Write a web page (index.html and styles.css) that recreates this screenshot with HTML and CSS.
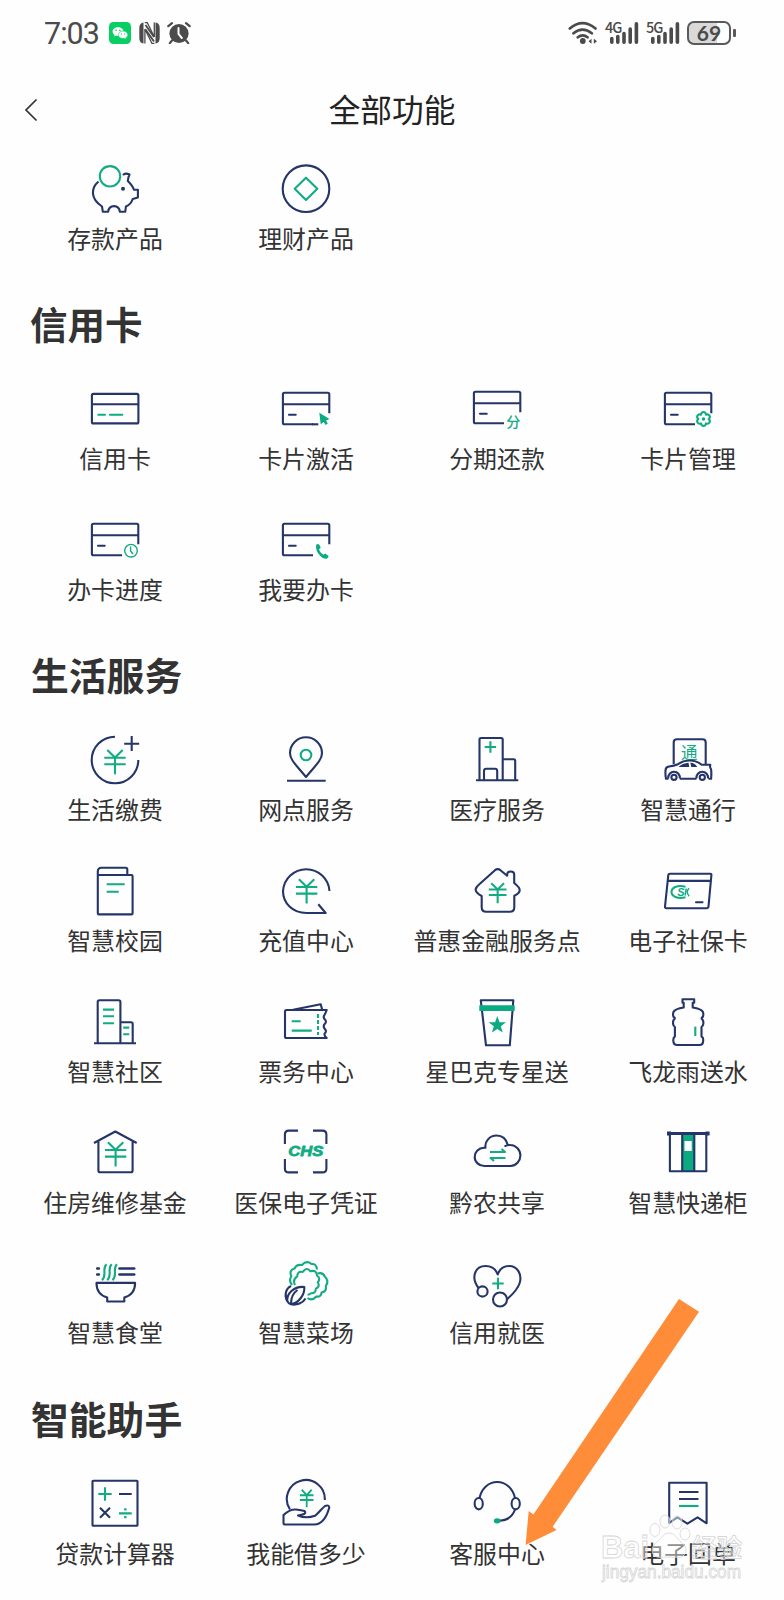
FILE: index.html
```html
<!DOCTYPE html>
<html lang="zh-CN">
<head>
    <meta charset="UTF-8">
    <meta name="viewport" content="width=device-width, initial-scale=1.0">
    <title>全部功能</title>
    <link rel="stylesheet" href="styles.css">
</head>
<body>
    <!-- shared shapes -->
    <svg class="defs" width="0" height="0">
        <symbol id="yen" viewBox="0 0 50 50">
            <path d="M17.3 15 25 22.5l7.7-7.5M14.3 22.7h21.4M14.3 29.3h21.4M25 22.5v16.8"/>
        </symbol>
        <symbol id="card" viewBox="0 0 50 50">
            <path d="M48.3 29.3V10.2q0-1.5-1.5-1.5H3.4q-1.5 0-1.5 1.5v28.6q0 1.5 1.5 1.5H32M1.9 20.3h46.4"/>
            <path d="M8 30.7h6.7" stroke-linecap="round"/>
        </symbol>
    </svg>

    <div class="status-bar">
        <div class="status-left">
            <span class="time">7:03</span>
            <svg class="wechat" width="22" height="22" viewBox="0 0 22 22">
                <rect width="22" height="22" rx="4.5" fill="#07cf63"/>
                <path d="M9 5.2c-3 0-5.4 1.9-5.4 4.3 0 1.4.8 2.6 2 3.4l-.5 1.7 2-1c.6.2 1.2.3 1.9.3 3 0 5.4-1.900 5.400-4.400S12 5.200 9 5.200z" fill="#fff"/>
                <path d="M14 9c-2.600 0-4.700 1.700-4.700 3.800s2.100 3.800 4.700 3.800l1.600-.2 1.700.9-.4-1.500c1.200-.7 1.900-1.800 1.900-3C18.800 10.700 16.600 9 14 9z" fill="#fff" stroke="#07cf63" stroke-width=".6"/>
                <g fill="#07cf63"><circle cx="7.200" cy="8.300" r=".8"/><circle cx="10.800" cy="8.300" r=".8"/><circle cx="12.500" cy="12" r=".6"/><circle cx="15.500" cy="12" r=".6"/></g>
            </svg>
            <svg class="nfc" width="21" height="22" viewBox="0 0 21 22">
                <path d="M4.500.5Q.3 1 .3 6v10q0 5 4.200 5.500z" fill="#4b4b4b"/>
                <path d="M16.500.5Q20.700 1 20.700 6v10q0 5-4.200 5.500z" fill="#4b4b4b"/>
                <path d="M5.800.5h2.400L15.300 15V.5M5.900 21.500V7l7.100 14.500h2.400" fill="none" stroke="#4b4b4b" stroke-width="1.300"/>
                <path d="M6.500 3l8.500 12M6.500 7.500l8.500 12" stroke="#4b4b4b" stroke-width="1.900"/>
            </svg>
            <svg class="alarm" width="24" height="22" viewBox="0 0 24 22">
                <circle cx="12" cy="11.500" r="9.600" fill="#4b4b4b"/>
                <path d="M1.300 4.200 5 1.200M22.700 4.200 19 1.200M5 18.500l-2.200 2.600M19 18.500l2.200 2.600" stroke="#4b4b4b" stroke-width="2.200" stroke-linecap="round"/>
                <path d="M11.500 6v6l3.300 4" fill="none" stroke="#fff" stroke-width="2" stroke-linecap="round"/>
            </svg>
        </div>
        <div class="status-right">
            <svg class="wifi" width="30" height="24" viewBox="0 0 30 24">
                <g fill="none" stroke="#4b4b4b" stroke-width="2.700" stroke-linecap="round">
                    <path d="M1.800 7.500Q14.500-3.300 27.500 7.500M5.500 12.300q9-7.300 18.300 0M9.800 16.300q4.900-4 9.700 0"/>
                </g>
                <circle cx="14.800" cy="20" r="2.900" fill="#4b4b4b"/>
                <path d="M20.500 20.300l3-2.500v5zM29 20.300l-3.200-2.500v5z" fill="#4b4b4b"/>
            </svg>
            <div class="signal">
                <span>4G</span>
                <svg width="34" height="24" viewBox="0 0 34 24">
                    <path d="M6.800 17.500v3.800M12.800 15.500v5.800M19 12.500v8.800M25.200 8v13.300M31.400 2.700v18.600" stroke="#4b4b4b" stroke-width="3.600" stroke-linecap="round"/>
                </svg>
            </div>
            <div class="signal">
                <span>5G</span>
                <svg width="34" height="24" viewBox="0 0 34 24">
                    <path d="M6.800 17.500v3.800M12.800 15.500v5.800M19 12.500v8.800M25.200 8v13.300M31.400 2.700v18.600" stroke="#4b4b4b" stroke-width="3.600" stroke-linecap="round"/>
                </svg>
            </div>
            <div class="battery"><span>69</span></div>
            <div class="battery-tip"></div>
        </div>
    </div>

    <div class="header">
        <svg class="back" width="14" height="24" viewBox="0 0 14 24">
            <path d="M12.500 1.500 2 12l10.500 10.500" fill="none" stroke="#333" stroke-width="1.700"/>
        </svg>
        <h1>全部功能</h1>
    </div>

    <div class="content">
        <div class="grid">
            <div class="item">
                <svg class="icon" viewBox="0 0 50 50">
                    <path d="M8.500 17.500C1 24 0 34.500 12 42.500l.8 5.200h5.400c.4-3.700 2.800-5.600 5.800-5.600s5.400 1.900 5.800 5.600h5.500l.6-5.200c3.500-1.500 5.600-3.700 6.800-7.500l5.200-1.500v-7.800h-4c-1-3.700-3.400-6-6.100-8.700.2-2.300.5-4 1.700-6.500-3-1.300-5.500-.7-6.500.7"/>
                    <circle class="dot-navy" cx="33" cy="24.700" r="2"/>
                    <circle class="green" cx="20" cy="12.300" r="10.200"/>
                </svg>
                <span>存款产品</span>
            </div>
            <div class="item">
                <svg class="icon" viewBox="0 0 50 50">
                    <circle cx="25" cy="24.700" r="23.300"/>
                    <path class="green" d="M25 13.700 36.300 24.800 25 36 13.700 24.800z"/>
                </svg>
                <span>理财产品</span>
            </div>
        </div>

        <h2>信用卡</h2>
        <div class="grid">
            <div class="item">
                <svg class="icon" viewBox="0 0 50 50">
                    <rect x="1.900" y="9.900" width="46.500" height="29.500" rx="1.500"/>
                    <path d="M1.900 20.300h46.500"/>
                    <path class="green round" d="M8.300 30.700h6.700M20 30.700h12.300"/>
                </svg>
                <span>信用卡</span>
            </div>
            <div class="item">
                <svg class="icon" viewBox="0 0 50 50">
                    <use href="#card"/>
                    <path d="M31 40.300h6.300"/>
                    <path class="fill-green" d="M38.300 28.700 39.700 40.300l3-2.300 1.900 3 2.200-1.500-1.800-2.900 3.500-1.500z"/>
                </svg>
                <span>卡片激活</span>
            </div>
            <div class="item">
                <svg class="icon" viewBox="0 0 50 50">
                    <use href="#card" y="-1"/>
                    <text class="glyph fen" x="41.200" y="42.600" font-size="14">分</text>
                </svg>
                <span>分期还款</span>
            </div>
            <div class="item">
                <svg class="icon" viewBox="0 0 50 50">
                    <use href="#card"/>
                    <path class="green" d="M38 30.700q.3-2.700 2.500-2.700t2.500 2.700q2.400-1 3.500.9t-.9 3.400q2 1.600.9 3.500t-3.500.9q-.3 2.500-2.500 2.500t-2.500-2.500q-2.400 1-3.500-.9t.9-3.500q-2-1.500-.9-3.400t3.500-.9z"/>
                    <circle class="fill-green" cx="40.500" cy="35" r="1.700"/>
                </svg>
                <span>卡片管理</span>
            </div>
            <div class="item">
                <svg class="icon" viewBox="0 0 50 50">
                    <use href="#card"/>
                    <g class="green thin"><circle cx="41" cy="35.700" r="6.300"/><path d="M40.600 31.500v4.500l2.400 3"/></g>
                </svg>
                <span>办卡进度</span>
            </div>
            <div class="item">
                <svg class="icon" viewBox="0 0 50 50">
                    <use href="#card"/>
                    <path class="fill-green" d="M35.300 29.500q2.300-1.600 3.500.9l.9 2.300-1.700 1.700q1.300 3.600 4.500 5.300l1.800-1.200 3 2.200q1 1-1.200 2.700-3.400 1.300-7.200-3-5-5.200-3.600-10.900z"/>
                </svg>
                <span>我要办卡</span>
            </div>
        </div>

        <h2 class="wide">生活服务</h2>
        <div class="grid">
            <div class="item">
                <svg class="icon" viewBox="0 0 50 50">
                    <path d="M25 1.700A23.300 23.300 0 1 0 48.300 25M41.700 1v15M34.200 8.700h15"/>
                    <use class="green" href="#yen"/>
                </svg>
                <span>生活缴费</span>
            </div>
            <div class="item">
                <svg class="icon" viewBox="0 0 50 50">
                    <path d="M25 42C16 31 9 25 9 18.300a16 16 0 0 1 32 0C41 25 34 31 25 42zM6 45.700h38.700"/>
                    <circle class="green" cx="25" cy="20" r="5.300"/>
                </svg>
                <span>网点服务</span>
            </div>
            <div class="item">
                <svg class="icon" viewBox="0 0 50 50">
                    <path d="M7.500 45.300V4.500q0-1.500 1.500-1.500h20.200q1.500 0 1.500 1.500v40.800M30.700 24.300h11q1.500 0 1.500 1.500v19.500M12 45.300V36q0-2.300 2.300-2.300H23q2.200 0 2.200 2.300v9.300M4 45.300h42.300"/>
                    <path class="green" d="M18.400 6.300v11.400M12.700 12h11.400"/>
                </svg>
                <span>医疗服务</span>
            </div>
            <div class="item">
                <svg class="icon" viewBox="0 0 50 50">
                    <path d="M10.700 29V7.500q0-3.200 3.200-3.200h25.600q3.200 0 3.200 3.200V29"/>
                    <text class="glyph" x="26.300" y="24" font-size="16.500">通</text>
                    <path class="body" d="M5.500 43.800H3q-.8-4-.5-8.300 0-3.500 3.500-4 5-.7 9-2.300 5-3.700 11.500-3.700 6.500-.3 12.200 4.300h8.600q-.8 2.300.8 4.500.5 4.500 0 9.500h-2.600M16.800 43.800h16.700"/>
                    <path class="fill-navy" d="M15.500 32q4-3.800 10-4.200l.8 4.200zM27.300 27.800q4-.2 7 4.200h-6z"/>
                    <path d="M5.300 43.500a5.800 6 0 1 1 11.500 0M33.500 43.500a5.800 6 0 1 1 11.500 0"/>
                    <circle cx="11" cy="42.300" r="2.600"/><circle cx="39.300" cy="42.300" r="2.600"/>
                </svg>
                <span>智慧通行</span>
            </div>
            <div class="item">
                <svg class="icon" viewBox="0 0 50 50">
                    <path d="M7.800 46V5.500q0-3.800 3.800-3.800h24q1.700 0 1.700 1.700V9M7.800 9h33.600q1.200 0 1.200 1.200v37q0 1.200-1.200 1.200H9q-1.200 0-1.200-1.200V44"/>
                    <path class="green" d="M16.700 18.300h18M16.700 25.700h12"/>
                </svg>
                <span>智慧校园</span>
            </div>
            <div class="item">
                <svg class="icon" viewBox="0 0 50 50">
                    <path d="M48.500 25A23.300 23.300 0 0 0 2 25c0 12 9.500 22 23.500 22H44.700l-7.400-8.700"/>
                    <use class="green" href="#yen" x=".6" y="-1.700"/>
                </svg>
                <span>充值中心</span>
            </div>
            <div class="item">
                <svg class="icon" viewBox="0 0 50 50">
                    <path d="M23 4.200q2.700-2 5.400 0l6.800 5.500V8.500q0-3 3.500-3t3.500 3V17q5.500 4.300 5.500 7.200t-5.400 5.500v11.500q0 4.500-4.500 4.500H14.200q-4.500 0-4.500-4.500V30Q4 27 3.600 23.700q.2-2.700 4-5.700z"/>
                    <g class="green" transform="translate(4.900 4.700) scale(.83)"><use href="#yen" stroke-width="2.500"/></g>
                </svg>
                <span>普惠金融服务点</span>
            </div>
            <div class="item">
                <svg class="icon" viewBox="0 0 50 50">
                    <path d="M7 7.700h40.200q1.300 0 1.200 1.300l-2.900 31.500q-.2 1.800-1.900 1.800H3.500q-1.600 0-1.500-1.600L5.300 9q.1-1.300 1.700-1.300zM5 14.900h43"/>
                    <path d="M33 36.300h6.500" class="round"/>
                    <path class="green" d="M22.500 20.800C14 18.500 8.500 21.800 8.500 26s6 7.300 14 5.200"/>
                    <text class="logo" x="17.800" y="30" font-size="11">S</text>
                    <path class="green thin" d="M23.300 22.500l-1.300 7M26 22.300q-3.600 4 .2 8"/>
                </svg>
                <span>电子社保卡</span>
            </div>
            <div class="item">
                <svg class="icon" viewBox="0 0 50 50">
                    <path d="M7.700 46.300V5q0-1.700 1.700-1.700h19.300q1.700 0 1.700 1.700v41.300M30.400 25.300h10.700q1.600 0 1.600 1.600v19.400M4 46.300h42"/>
                    <path class="green" d="M13 12.600h11M13 19.300h11M13 26.300h11M33.200 30.600h6M33.200 37.300h6"/>
                </svg>
                <span>智慧社区</span>
            </div>
            <div class="item">
                <svg class="icon" viewBox="0 0 50 50">
                    <path d="M45.700 13H5.500Q4 13 4 14.500v25Q4 41 5.500 41h40.200q-3-2.500-2-4.500 2.500-2.200 0-4.800-2-2.300 0-4.700 2.500-2.300 0-4.700-2-2.300 0-4.700 1-1.800 2-4.600zM12 12.800l27.700-5.500 1.500 5.500"/>
                    <path class="green" d="M10.700 24.300h9M10.700 33.600h20"/>
                    <path class="green dash" d="M37 17v21"/>
                </svg>
                <span>票务中心</span>
            </div>
            <div class="item">
                <svg class="icon" viewBox="0 0 50 50">
                    <path d="M8.800 3.300h32.500l-3.500 45H14z"/>
                    <path class="fill-green" d="M7.300 8.300h35.400v5.600H7.300zM25.300 19l2.200 6.200 6.500.1-5.200 4 1.900 6.300-5.400-3.700-5.400 3.700 1.900-6.300-5.200-4 6.500-.1z"/>
                </svg>
                <span>星巴克专星送</span>
            </div>
            <div class="item">
                <svg class="icon" viewBox="0 0 50 50">
                    <path d="M19.500 2.300h11.700v3.500h-1.500v4.700q8.500 1.200 10.300 4.500.7 3-.2 5-2.500 1.200 0 3 1.200 2.700 0 5.500-1.700 1.300-1.300 2.500v8.500q2 1 1.700 4 0 4.500-3.700 4.500H14.200q-3.900 0-3.900-4.500-.2-3 1.600-4V31q.4-1.200-1.300-2.500-1.200-2.800 0-5.500 2.500-1.800 0-3-1-2-.2-5 1.800-3.300 10.300-4.500V5.800h-1.200z"/>
                    <path class="green" d="M32.300 29.600V39"/>
                </svg>
                <span>飞龙雨送水</span>
            </div>
            <div class="item">
                <svg class="icon" viewBox="0 0 50 50">
                    <path d="M4 16 25.300 4.500 46.700 16M8.400 14v29.500q0 1.800 1.800 1.800h30.600q1.800 0 1.800-1.800V14"/>
                    <use class="green" href="#yen" x=".6" y=".3"/>
                </svg>
                <span>住房维修基金</span>
            </div>
            <div class="item">
                <svg class="icon" viewBox="0 0 50 50">
                    <path d="M3.900 17V7.600q0-4 4-4H17M32 3.600h9.400q4 0 4 4V17M3.900 32v9.400q0 4 4 4H17M32 45.400h9.400q4 0 4-4V32"/>
                    <text class="logo chs" x="24.700" y="29" font-size="14" textLength="35" lengthAdjust="spacingAndGlyphs">CHS</text>
                </svg>
                <span>医保电子凭证</span>
            </div>
            <div class="item">
                <svg class="icon" viewBox="0 0 50 50">
                    <path d="M32.500 19.500q2.500-1.800 6-1.500c5.500.3 9.900 5 9.900 10.500S44 39 38.500 39H12.300C7 39 2.700 35 2.700 30s4-9 9.300-9.200h1.500C12.500 14 18 8.500 24.500 8.500c5.500 0 9.800 3.500 11.300 9.500"/>
                    <path class="green" d="M18 25h15l-3.500-3M33.500 31h-15l3.500 3"/>
                </svg>
                <span>黔农共享</span>
            </div>
            <div class="item">
                <svg class="icon" viewBox="0 0 50 50">
                    <path class="fill-green" d="M19.500 8h11.700v36H19.500z"/>
                    <path class="window" d="M21.500 14h7.200v10h-7.200z"/>
                    <path d="M6.900 7v37.200h36.400V7M19.200 7v37M31.300 7v37"/>
                    <path stroke-width="2.800" d="M4.300 6.500h41.900"/>
                    <path class="fill-navy" d="M4 4.500h4v4H4zM42.500 4.500h4v4h-4z"/>
                </svg>
                <span>智慧快递柜</span>
            </div>
            <div class="item">
                <svg class="icon" viewBox="0 0 50 50">
                    <path d="M6.500 24.900h38.600c0 7.500-4 12.500-10.800 14.600v4H17.200v-4C10.500 37.500 6.500 32.500 6.500 24.900z"/>
                    <path class="round" stroke-width="2.700" d="M7.300 10.500h1.500M7.300 16.500h1.500M29.500 10.500h14.700M29.500 16.500h14.700"/>
                    <path class="green" d="M16.500 6.200c-5 4.500 1 11-4.500 16M21.700 6.200c-5 4.500 1 11-4.500 16M27 6.200c-5 4.500 1 11-4.500 16"/>
                </svg>
                <span>智慧食堂</span>
            </div>
            <div class="item">
                <svg class="icon" viewBox="0 0 50 50">
                    <path class="green" d="M11 27q-3.500-4.500-.7-8.500-2.500-6.500 3.200-8 2-4.500 7.500-3.500 4.500-5 9.500-1 5-.5 5.500 5.500"/>
                    <path class="green" d="M14 27q-2.800-5.500 2.200-8.700.3-5.500 5.500-4.300 3.800-5.500 7.800-.7 6-1.800 6.500 4.200 4 3 .8 6.700 2.500 4.500-2 6.500 0 5-4.800 4.500-1.500 1.500-3.500 1.500"/>
                    <path class="green" d="M36.500 15.500q5.500-1.500 7.300 3 4.700 4.500 1 9.500 1.200 5.500-4.200 6.500-.6 5-5.300 4-4.500 5-8.800 1.500"/>
                    <path d="M10 28C4.500 30.500 3 38 6.500 43.500 5 36 13 28 23.300 29c.7 8.500-6.500 16.500-13.500 17.300C16 47.500 22 45 24.500 40.500M6.500 43.500q1.300 2.300 3.300 2.800M10 45.500Q10 36.500 16.500 32"/>
                </svg>
                <span>智慧菜场</span>
            </div>
            <div class="item">
                <svg class="icon" viewBox="0 0 50 50">
                    <g stroke-width="2.100">
                        <path d="M6.500 30C-1.500 19.500 3 8 13.500 8c5.500 0 10.300 3 12.200 8.500C27.600 11 32 8 37 8c8.500 0 13.500 8.500 10.500 17.500-2 6-7 11-12.500 15.800"/>
                        <circle cx="10.500" cy="33.500" r="5.100"/><circle cx="28" cy="41.500" r="7"/>
                    </g>
                    <path class="green" d="M26 19.800v11.400M20.300 25.500h11.400"/>
                </svg>
                <span>信用就医</span>
            </div>
        </div>

        <h2 class="wide">智能助手</h2>
        <div class="grid">
            <div class="item">
                <svg class="icon" viewBox="0 0 50 50">
                    <rect x="2.500" y="2.700" width="45" height="45" rx=".8"/>
                    <path d="M29 16h12.700M10 29.800l10 10M20 29.800l-10 10"/>
                    <path class="green" d="M15 9.300v13.400M8.300 16h13.400M29 35.400h12.700"/>
                    <path class="fill-green" d="M34.200 30.300h2.300v2.300h-2.300zM34.200 38h2.300v2.300h-2.300z"/>
                </svg>
                <span>贷款计算器</span>
            </div>
            <div class="item">
                <svg class="icon" viewBox="0 0 50 50">
                    <path d="M9 31.500A19 19 0 1 1 43.800 22"/>
                    <path d="M2.500 37q6.500-6 12.500-5.500 5.500.7 8.500 1.500c2.500 2.500-1.500 4-6.500 4.500 6 2.500 12 2 17 .3C38 35 41 30 44 28q4-1.500 4.300 1.500C46.500 36 43 46.500 33 46.500H4q-1.500 0-1.500-1.500z"/>
                    <g class="green" transform="translate(9.700 1) scale(.64 .72)"><use href="#yen" stroke-width="2.800"/></g>
                </svg>
                <span>我能借多少</span>
            </div>
            <div class="item">
                <svg class="icon" viewBox="0 0 50 50">
                    <ellipse cx="6.700" cy="25.700" rx="4.100" ry="5.700"/><ellipse cx="43.700" cy="25.700" rx="4.100" ry="5.700"/>
                    <path d="M7.500 20C9.500 10.500 16.500 4 25.200 4S41 10.500 43 20M43 31.500C40.500 38.500 35 42.500 27 42.700"/>
                    <ellipse class="fill-green" cx="25.200" cy="42.800" rx="3.400" ry="2.600"/>
                </svg>
                <span>客服中心</span>
            </div>
            <div class="item">
                <svg class="icon" viewBox="0 0 50 50">
                    <path d="M6.200 4.800h37.400v40.500l-9-6-10.200 6.300-10-6.300-8.200 5.700z"/>
                    <path d="M16 14h19.500M16 21h19.500"/><path class="green" d="M16 28h19.500"/>
                </svg>
                <span>电子回单</span>
            </div>
        </div>
    </div>

    <!-- pointer to 客服中心 -->
    <svg class="arrow" width="176" height="250" viewBox="524 1297 176 250">
        <path d="M679 1299 699 1311.700 552.700 1526.700 556.500 1530 525.600 1545 528.700 1511 533.400 1514.500z" fill="#ff8c39"/>
    </svg>

    <svg class="watermark" width="150" height="76" viewBox="596 1510 150 76">
        <g fill="#fff" fill-opacity=".45" stroke="#d6d6d6" stroke-width=".8">
            <text class="wm-bold" x="601" y="1558" font-size="32" textLength="48" lengthAdjust="spacingAndGlyphs">Bai</text>
            <text class="wm-cjk" x="692" y="1557" font-size="25">经验</text>
            <text class="wm-url" x="602" y="1578" font-size="17.500" textLength="139" lengthAdjust="spacingAndGlyphs">jingyan.baidu.com</text>
            <path d="M669 1533c-6 0-8 6-12 9-5 4-6 8-4 12 3 5 9 3 16 3s13 2 16-3c2-4 1-8-4-12-4-3-6-9-12-9z"/>
            <ellipse cx="655" cy="1530" rx="5" ry="6.500"/><ellipse cx="665" cy="1521.500" rx="5" ry="6.500"/>
            <ellipse cx="677" cy="1522.500" rx="5" ry="6.500"/><ellipse cx="685" cy="1534" rx="5" ry="6"/>
        </g>
    </svg>
</body>
</html>
```

FILE: styles.css
```css
body {
    position: relative;
    margin: 0;
    width: 784px;
    height: 1600px;
    overflow: hidden;
    background-color: #fefefe;
    color: #333;
    font-family: "Noto Sans CJK SC", sans-serif;
}
.defs {
    position: absolute;
}
.status-bar {
    display: flex;
    justify-content: space-between;
    align-items: center;
    height: 66px;
    padding: 0 49px 0 44px;
    color: #4b4b4b;
}
.status-left,
.status-right {
    display: flex;
    align-items: center;
}
.time {
    width: 65px;
    padding-top: 2px;
    font-family: Roboto, sans-serif;
    font-size: 30.5px;
    line-height: 36px;
    letter-spacing: -1px;
}
.nfc {
    margin-left: 8px;
}
.alarm {
    margin-left: 7px;
}
.wifi {
    margin-right: 7px;
}
.signal {
    position: relative;
    width: 34px;
    height: 24px;
    margin-right: 7px;
}
.signal span {
    position: absolute;
    left: 0;
    top: 0;
    font-family: "Noto Sans CJK SC", sans-serif;
    font-weight: 500;
    font-size: 14.5px;
    line-height: 12px;
    letter-spacing: -1px;
}
.signal svg {
    display: block;
}
.battery {
    width: 40px;
    height: 20px;
    border: 2px solid #5a5a5a;
    border-radius: 7px;
    background: linear-gradient(to right, #d9d9d9 70%, #fefefe 70%);
    text-align: center;
    font-family: Lato, sans-serif;
    font-weight: bold;
    font-size: 21px;
    line-height: 20px;
}
.battery-tip {
    width: 3px;
    height: 8px;
    margin-left: 2px;
    margin-right: -1px;
    border-radius: 1px;
    background-color: #5a5a5a;
}
.header {
    display: grid;
    grid-template-columns: 60px 1fr 60px;
    align-items: center;
    height: 88px;
}
.back {
    margin-left: 24px;
}
.header h1 {
    margin: 0;
    padding-bottom: 4px;
    text-align: center;
    font-size: 31.7px;
    font-weight: 400;
    line-height: 48px;
    color: #222;
}
.content {
    padding: 9.5px 0 0;
}
.grid {
    display: grid;
    grid-template-columns: repeat(4, 191px);
    row-gap: 39.7px;
    margin-left: 19.5px;
}
.item {
    display: flex;
    flex-direction: column;
    align-items: center;
    gap: 9.3px;
    height: 91px;
    white-space: nowrap;
    font-size: 23.9px;
    line-height: 30px;
}
.icon {
    width: 50px;
    height: 50px;
    flex: none;
    fill: none;
    stroke: #25356a;
    stroke-width: 2.1;
    stroke-linejoin: round;
}
.icon .green {
    stroke: #12ab82;
}
.icon .thin {
    stroke-width: 1.4;
}
.icon .round {
    stroke-linecap: round;
}
.icon .dash {
    stroke-dasharray: 4 2;
}
.icon .body {
    fill: #fefefe;
}
.icon .window {
    fill: #fff;
    stroke: none;
}
.icon .fill-green {
    fill: #0aab80;
    stroke: none;
}
.icon .fill-navy,
.icon .dot-navy {
    fill: #25356a;
    stroke: none;
}
.icon .glyph,
.icon .logo {
    fill: #12ab82;
    stroke: none;
    text-anchor: middle;
}
.icon .fen {
    font-weight: 500;
}
.icon .logo {
    font-family: "Liberation Sans", sans-serif;
    font-weight: bold;
    font-style: italic;
}
.icon .chs {
    stroke: #12ab82;
    stroke-width: .8;
}
h2 {
    margin: 43.8px 0 35.7px 30px;
    font-size: 37.5px;
    font-weight: 700;
    line-height: 50px;
}
h2.wide {
    margin-left: 31px;
    font-size: 37.8px;
}
.arrow {
    position: absolute;
    left: 524px;
    top: 1297px;
}
.watermark {
    position: absolute;
    left: 596px;
    top: 1510px;
}
.wm-bold {
    font-family: "Liberation Sans", sans-serif;
    font-weight: bold;
}
.wm-cjk {
    font-weight: bold;
}
.wm-url {
    font-family: "Liberation Sans", sans-serif;
}
```
